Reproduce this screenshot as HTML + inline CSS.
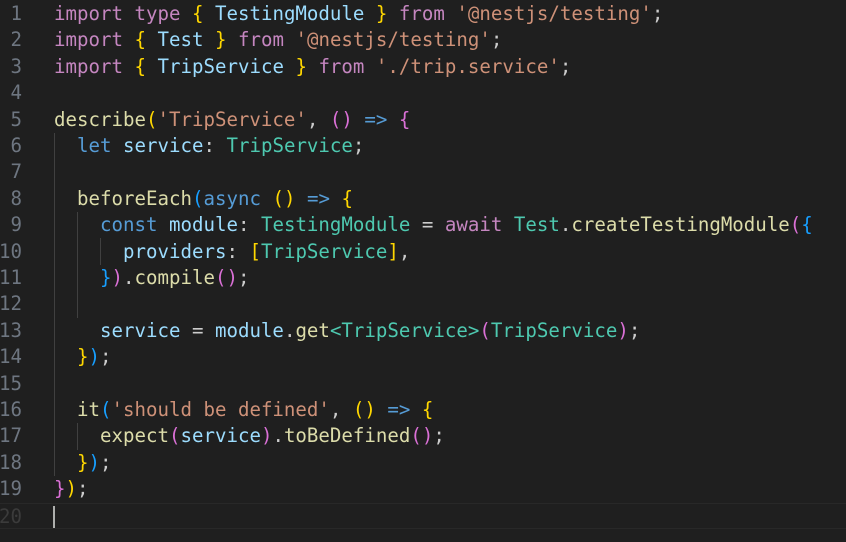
<!DOCTYPE html><html><head><style>
body{margin:0;background:#1f1f1f;width:846px;height:542px;overflow:hidden;font-family:"DejaVu Sans Mono",monospace;font-size:19.1px}
.l{position:absolute;left:0;height:26.4px;line-height:26.4px;white-space:pre;width:846px}
.n{position:absolute;right:824px;color:#6e7681;text-align:right}
.c{position:absolute;left:54px;color:#cccccc}
.k{color:#c586c0}.b{color:#569cd6}.v{color:#9cdcfe}.t{color:#4ec9b0}.s{color:#ce9178}.f{color:#dcdcaa}.cn{color:#9cdcfe}
.g{color:#ffd700}.p{color:#da70d6}.u{color:#179fff}
.ig{position:absolute;width:1px;background:#404040}
</style></head><body>
<div class="l" style="top:1px"><span class="n">1</span><span class="c"><span class="k">import</span> <span class="k">type</span> <span class="g">{</span> <span class="v">TestingModule</span> <span class="g">}</span> <span class="k">from</span> <span class="s">'@nestjs/testing'</span>;</span></div>
<div class="l" style="top:27.4px"><span class="n">2</span><span class="c"><span class="k">import</span> <span class="g">{</span> <span class="v">Test</span> <span class="g">}</span> <span class="k">from</span> <span class="s">'@nestjs/testing'</span>;</span></div>
<div class="l" style="top:53.8px"><span class="n">3</span><span class="c"><span class="k">import</span> <span class="g">{</span> <span class="v">TripService</span> <span class="g">}</span> <span class="k">from</span> <span class="s">'./trip.service'</span>;</span></div>
<div class="l" style="top:80.2px"><span class="n">4</span></div>
<div class="l" style="top:106.6px"><span class="n">5</span><span class="c"><span class="f">describe</span><span class="g">(</span><span class="s">'TripService'</span>, <span class="p">()</span> <span class="b">=&gt;</span> <span class="p">{</span></span></div>
<div class="l" style="top:133px"><span class="n">6</span><span class="c">  <span class="b">let</span> <span class="v">service</span>: <span class="t">TripService</span>;</span></div>
<div class="l" style="top:159.4px"><span class="n">7</span></div>
<div class="l" style="top:185.8px"><span class="n">8</span><span class="c">  <span class="f">beforeEach</span><span class="u">(</span><span class="b">async</span> <span class="g">()</span> <span class="b">=&gt;</span> <span class="g">{</span></span></div>
<div class="l" style="top:212.2px"><span class="n">9</span><span class="c">    <span class="b">const</span> <span class="cn">module</span>: <span class="t">TestingModule</span> = <span class="k">await</span> <span class="t">Test</span>.<span class="f">createTestingModule</span><span class="p">(</span><span class="u">{</span></span></div>
<div class="l" style="top:238.6px"><span class="n">10</span><span class="c">      <span class="v">providers</span>: <span class="g">[</span><span class="t">TripService</span><span class="g">]</span>,</span></div>
<div class="l" style="top:265px"><span class="n">11</span><span class="c">    <span class="u">}</span><span class="p">)</span>.<span class="f">compile</span><span class="p">()</span>;</span></div>
<div class="l" style="top:291.4px"><span class="n">12</span></div>
<div class="l" style="top:317.8px"><span class="n">13</span><span class="c">    <span class="v">service</span> = <span class="cn">module</span>.<span class="f">get</span><span class="t">&lt;TripService&gt;</span><span class="p">(</span><span class="t">TripService</span><span class="p">)</span>;</span></div>
<div class="l" style="top:344.2px"><span class="n">14</span><span class="c">  <span class="g">}</span><span class="u">)</span>;</span></div>
<div class="l" style="top:370.6px"><span class="n">15</span></div>
<div class="l" style="top:397px"><span class="n">16</span><span class="c">  <span class="f">it</span><span class="u">(</span><span class="s">'should be defined'</span>, <span class="g">()</span> <span class="b">=&gt;</span> <span class="g">{</span></span></div>
<div class="l" style="top:423.4px"><span class="n">17</span><span class="c">    <span class="f">expect</span><span class="p">(</span><span class="v">service</span><span class="p">)</span>.<span class="f">toBeDefined</span><span class="p">()</span>;</span></div>
<div class="l" style="top:449.8px"><span class="n">18</span><span class="c">  <span class="g">}</span><span class="u">)</span>;</span></div>
<div class="l" style="top:476.2px"><span class="n">19</span><span class="c"><span class="p">}</span><span class="g">)</span>;</span></div>
<div class="l" style="top:502.6px;border-top:1px solid #282828;border-bottom:1px solid #282828;box-sizing:border-box"><span class="n" style="color:#3b3b3b">20</span><span style="position:absolute;left:53px;top:2px;width:2px;height:22px;background:#aeafad"></span></div>
<div class="ig" style="left:54px;top:133px;height:343px"></div>
<div class="ig" style="left:77px;top:212px;height:106px"></div>
<div class="ig" style="left:77px;top:423px;height:27px"></div>
<div class="ig" style="left:100px;top:238px;height:27px"></div>
</body></html>
